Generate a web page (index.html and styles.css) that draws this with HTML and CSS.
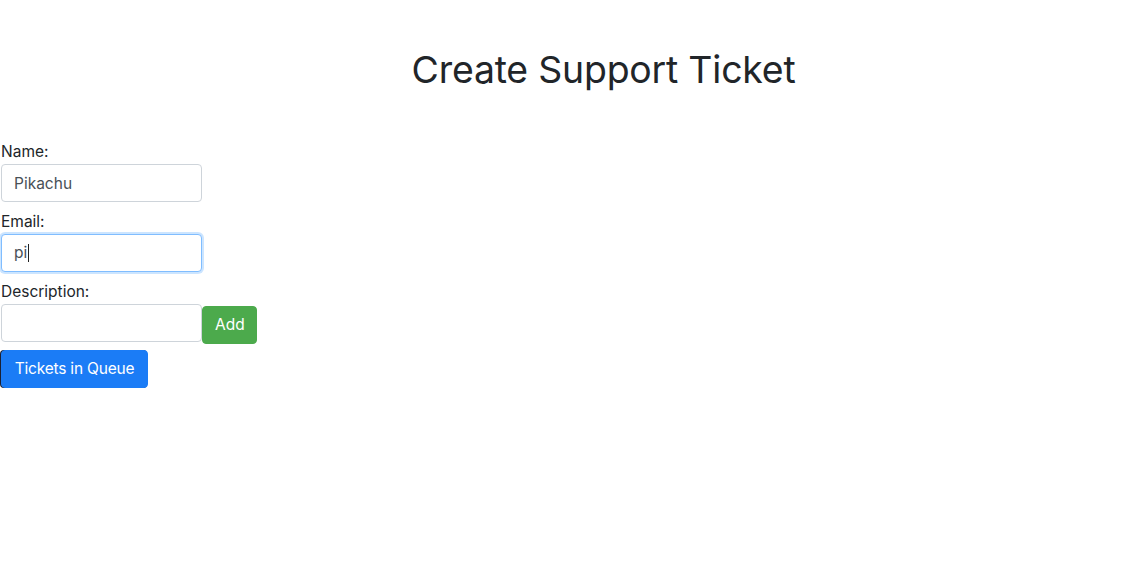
FILE: index.html
```html
<!DOCTYPE html>
<html lang="en">
<head>
<meta charset="utf-8">
<title>Create Support Ticket</title>
<link rel="stylesheet" href="styles.css">
</head>
<body>
<div class="page">
  <header class="header">
    <h1 class="title">Create Support Ticket</h1>
  </header>
  <form class="form">
    <label class="label" for="name">Name:</label>
    <input class="input" id="name" type="text" value="Pikachu">
    <label class="label" for="email">Email:</label>
    <div class="input input-focus"><span class="typed">pi</span><span class="caret"></span></div>
    <label class="label" for="desc">Description:</label>
    <div class="row">
      <input class="input" id="desc" type="text">
      <button class="btn btn-success" type="button">Add</button>
    </div>
    <button class="btn btn-primary btn-queue" type="button">Tickets in Queue</button>
  </form>
</div>
</body>
</html>
```
FILE: styles.css
```css
html, body {
  margin: 0;
  padding: 0;
  background: #fff;
}
body {
  font-family: Inter, "Liberation Sans", Arial, sans-serif;
  font-size: 16px;
  line-height: 1.5;
  color: #212529;
}
.page {
  width: 1144px;
  height: 576px;
  overflow: hidden;
}
.header {
  padding-left: 63px;
  padding-top: 46px;
}
.title {
  margin: 0;
  text-align: center;
  font-size: 37.4px;
  font-weight: 400;
  line-height: 48px;
  letter-spacing: -0.2px;
}
.form {
  display: flex;
  flex-direction: column;
  align-items: flex-start;
  padding-left: 1px;
  margin-top: 46px;
}
.label {
  display: block;
  height: 24px;
  line-height: 24px;
  font-size: 15.5px;
}
.label + .input {
  margin-bottom: 8px;
}
.input {
  box-sizing: border-box;
  width: 201px;
  height: 38px;
  margin: 0;
  padding: 6px 12px;
  font-family: inherit;
  font-size: 15.5px;
  line-height: 24px;
  color: #495057;
  background: #fff;
  border: 1px solid #ced4da;
  border-radius: 4px;
  outline: none;
}
.input-focus {
  display: flex;
  align-items: center;
  border-color: #80bdff;
  box-shadow: 0 0 0 2px rgba(0, 123, 255, 0.2);
  margin-bottom: 8px;
}
.typed {
  color: #495057;
}
.caret {
  display: inline-block;
  width: 1px;
  height: 18px;
  background: #222;
  margin-left: 1px;
}
.row {
  display: flex;
  align-items: flex-start;
}
.row .input {
  margin-bottom: 0;
}
.btn {
  box-sizing: border-box;
  height: 38px;
  margin: 0;
  padding: 6px 12px;
  font-family: inherit;
  font-size: 15.5px;
  line-height: 24px;
  color: #fff;
  white-space: nowrap;
  border: 1px solid transparent;
  border-radius: 4px;
  cursor: pointer;
}
.btn-success {
  margin-top: 2px;
  width: 55px;
  background: #4caa4c;
  border-color: #4caa4c;
}
.btn-primary {
  background: #1b7cf6;
  border-color: #1b7cf6;
}
.btn-queue {
  margin-top: 6px;
  width: 147px;
  padding: 6px 0;
  letter-spacing: -0.2px;
  box-shadow: -1px 0 0 #1a2033;
}
```
